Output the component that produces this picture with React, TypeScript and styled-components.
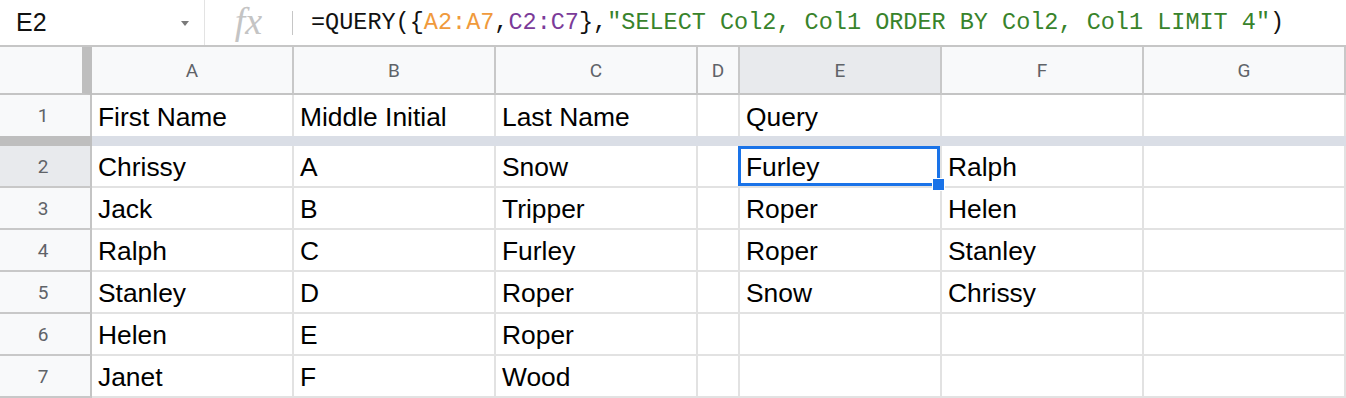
import React from "react";
import styled, { createGlobalStyle } from "styled-components";

const Global = createGlobalStyle`
  html, body { margin: 0; padding: 0; background: #ffffff; }
  body { overflow: hidden; }
`;

const COLS = "92px 202px 202px 202px 42px 202px 202px 202px";

const Page = styled.div`
  width: 1346px;
  height: 398px;
  overflow: hidden;
  background: #fff;
`;

const FormulaBar = styled.div`
  display: flex;
  align-items: center;
  height: 45px;
  border-bottom: 2px solid #c6c6c6;
`;

const NameBox = styled.div`
  width: 205px;
  height: 100%;
  box-sizing: border-box;
  display: flex;
  align-items: center;
  justify-content: space-between;
  padding: 0 15px 0 16px;
  border-right: 1px solid #e3e3e3;
  font-family: "Liberation Sans", Arial, sans-serif;
  font-size: 25px;
  color: #111;
`;

const Caret = styled.span`
  width: 0;
  height: 0;
  border-left: 4px solid transparent;
  border-right: 4px solid transparent;
  border-top: 5px solid #7a7a7a;
  margin-top: 2px;
`;

const FxBox = styled.div`
  width: 87px;
  height: 100%;
  display: flex;
  align-items: center;
  justify-content: center;
  font-family: "Liberation Serif", "Times New Roman", serif;
  font-style: italic;
  font-size: 38px;
  color: #c4c4c4;
  padding-bottom: 3px;
  box-sizing: border-box;
`;

const Divider = styled.div`
  width: 1px;
  height: 24px;
  background: #c6c6c6;
`;

const Formula = styled.div`
  padding-left: 18px;
  font-family: "Liberation Mono", "DejaVu Sans Mono", monospace;
  font-size: 23.5px;
  color: #111;
  white-space: pre;
`;

const Tok = styled.span<{ $c: string }>`
  color: ${(p) => p.$c};
`;

const Row = styled.div<{ $h: number }>`
  display: grid;
  grid-template-columns: ${COLS};
  height: ${(p) => p.$h}px;
`;

const Corner = styled.div`
  background: #f8f9fa;
  border-right: 10px solid #bebebe;
  border-bottom: 2px solid #c4c4c4;
`;

const ColHeader = styled.div<{ $sel?: boolean }>`
  background: ${(p) => (p.$sel ? "#e8eaed" : "#f8f9fa")};
  border-right: 2px solid #c8c8c8;
  border-bottom: 2px solid #c4c4c4;
  display: flex;
  align-items: center;
  justify-content: center;
  font-family: Roboto, "Liberation Sans", sans-serif;
  font-size: 19px;
  color: #5f6368;
`;

const RowHeader = styled.div<{ $sel?: boolean; $noBottom?: boolean }>`
  background: ${(p) => (p.$sel ? "#e8eaed" : "#f8f9fa")};
  border-right: 2px solid #c4c4c4;
  border-bottom: ${(p) => (p.$noBottom ? "none" : "2px solid #c8c8c8")};
  display: flex;
  align-items: center;
  justify-content: center;
  padding-right: 4px;
  font-family: Roboto, "Liberation Sans", sans-serif;
  font-size: 19px;
  color: #5f6368;
`;

const Cell = styled.div<{ $noBottom?: boolean }>`
  position: relative;
  border-right: 2px solid #e2e2e2;
  border-bottom: ${(p) => (p.$noBottom ? "none" : "2px solid #e2e2e2")};
  display: flex;
  align-items: flex-end;
  padding: 0 0 4px 6px;
  font-family: "Liberation Sans", Arial, sans-serif;
  font-size: 26.4px;
  line-height: 30px;
  color: #000;
  white-space: nowrap;
  overflow: visible;
`;

const Selection = styled.div`
  position: absolute;
  top: 0;
  left: -2px;
  right: 0;
  bottom: 0;
  border: 3px solid #1a73e8;
  pointer-events: none;
  z-index: 2;
`;

const Handle = styled.div`
  position: absolute;
  right: -8px;
  bottom: -8px;
  width: 11px;
  height: 11px;
  background: #1a73e8;
  border: 1px solid #fff;
`;

const Band = styled.div`
  display: grid;
  grid-template-columns: 92px 1fr;
  height: 10px;
`;

const BandHandle = styled.div`
  background: #bebebe;
`;

const BandLine = styled.div`
  background: #dadee6;
`;

const colLetters = ["A", "B", "C", "D", "E", "F", "G"];

const data: string[][] = [
  ["Chrissy", "A", "Snow", "", "Furley", "Ralph", ""],
  ["Jack", "B", "Tripper", "", "Roper", "Helen", ""],
  ["Ralph", "C", "Furley", "", "Roper", "Stanley", ""],
  ["Stanley", "D", "Roper", "", "Snow", "Chrissy", ""],
  ["Helen", "E", "Roper", "", "", "", ""],
  ["Janet", "F", "Wood", "", "", "", ""],
];

export default function App() {
  return (
    <Page>
      <Global />
      <FormulaBar>
        <NameBox>
          <span>E2</span>
          <Caret />
        </NameBox>
        <FxBox>fx</FxBox>
        <Divider />
        <Formula>
          =QUERY({"{"}
          <Tok $c="#f09a3c">A2:A7</Tok>,<Tok $c="#7b3b99">C2:C7</Tok>
          {"}"},<Tok $c="#38832b">"SELECT Col2, Col1 ORDER BY Col2, Col1 LIMIT 4"</Tok>)
        </Formula>
      </FormulaBar>

      <Row $h={48}>
        <Corner />
        {colLetters.map((l) => (
          <ColHeader key={l} $sel={l === "E"}>
            {l}
          </ColHeader>
        ))}
      </Row>

      <Row $h={41}>
        <RowHeader $noBottom>1</RowHeader>
        {["First Name", "Middle Initial", "Last Name", "", "Query", "", ""].map((t, i) => (
          <Cell key={i} $noBottom>
            {t}
          </Cell>
        ))}
      </Row>

      <Band>
        <BandHandle />
        <BandLine />
      </Band>

      {data.map((row, r) => (
        <Row key={r} $h={42}>
          <RowHeader $sel={r === 0}>{r + 2}</RowHeader>
          {row.map((t, c) => (
            <Cell key={c}>
              {t}
              {r === 0 && c === 4 && (
                <Selection>
                  <Handle />
                </Selection>
              )}
            </Cell>
          ))}
        </Row>
      ))}
    </Page>
  );
}
